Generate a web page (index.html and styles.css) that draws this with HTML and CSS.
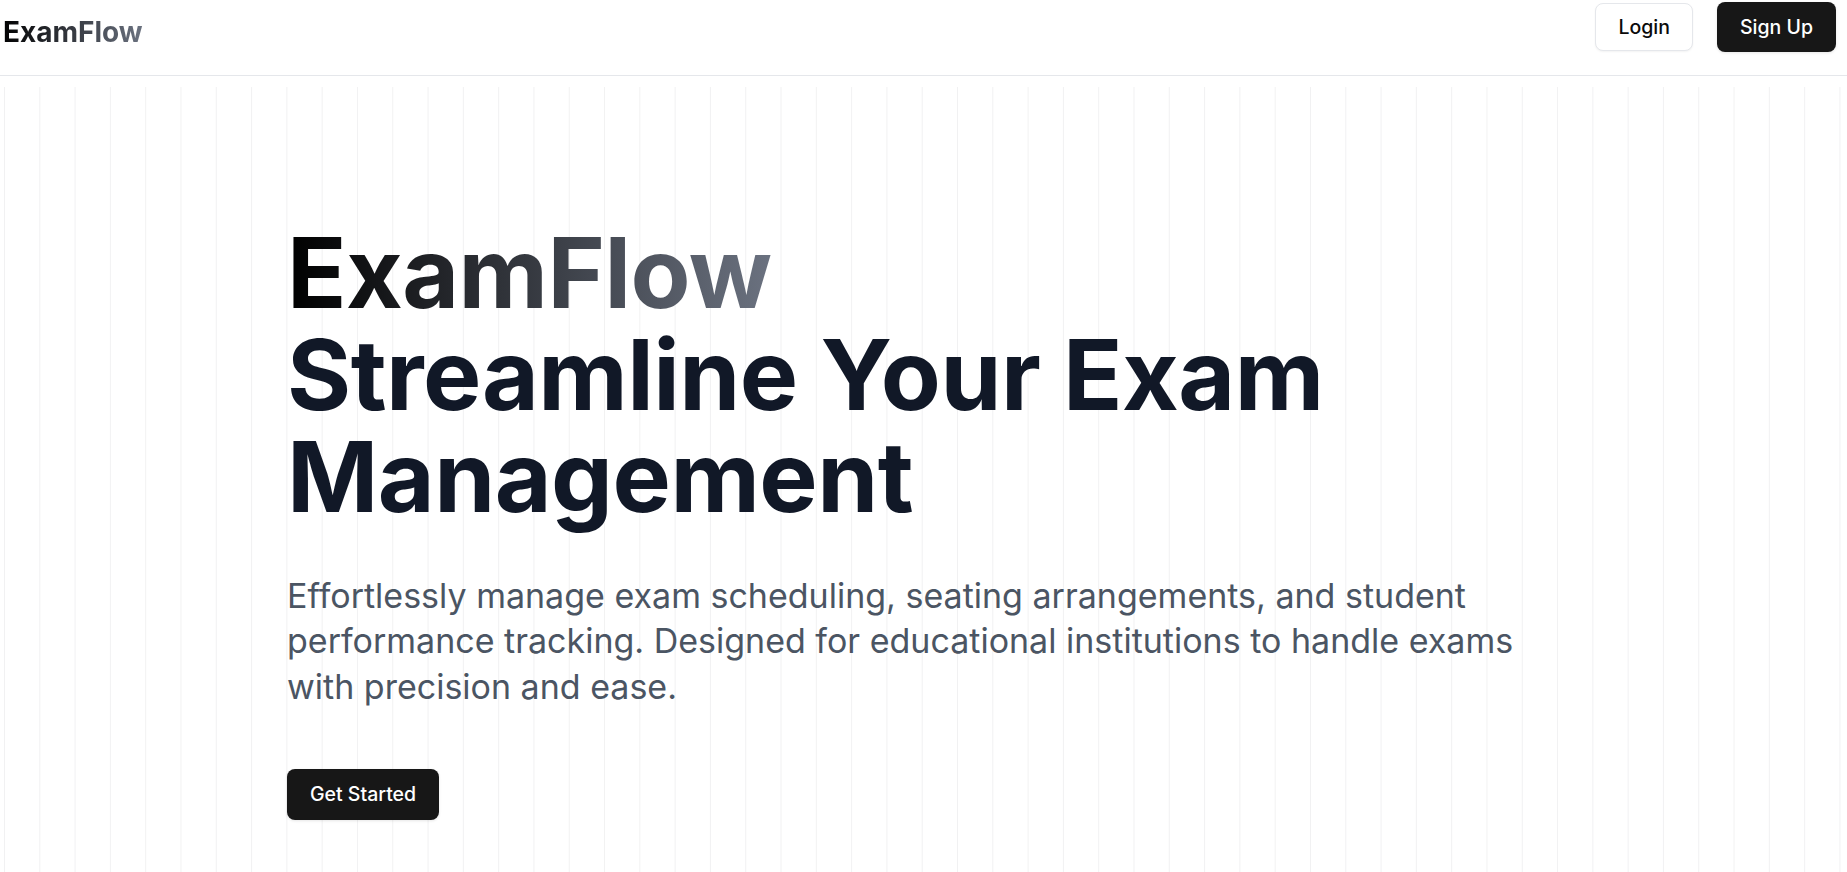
FILE: index.html
```html
<!DOCTYPE html>
<html lang="en">
<head>
<meta charset="utf-8">
<title>ExamFlow</title>
<link rel="stylesheet" href="styles.css">
</head>
<body>
<header class="topbar">
  <a class="logo" href="#">ExamFlow</a>
  <nav class="actions">
    <a class="btn btn-outline" href="#">Login</a>
    <a class="btn btn-dark" href="#">Sign Up</a>
  </nav>
</header>
<main class="hero">
  <div class="container">
    <h1 class="title">
      <span class="brand">ExamFlow</span><br>
      Streamline Your Exam Management
    </h1>
    <p class="lead">Effortlessly manage exam scheduling, seating arrangements, and student performance tracking. Designed for educational institutions to handle exams with precision and ease.</p>
    <a class="btn btn-dark btn-cta" href="#">Get Started</a>
  </div>
</main>
</body>
</html>
```
FILE: styles.css
```css
* { box-sizing: border-box; }
html, body { margin: 0; padding: 0; }
body {
  font-family: Inter, "Noto Sans", sans-serif;
  font-optical-sizing: none;
  background: #ffffff;
  color: #111827;
  height: 872px;
  overflow: hidden;
}
a { text-decoration: none; }

.topbar {
  display: flex;
  justify-content: space-between;
  align-items: flex-start;
  height: 76px;
  border-bottom: 1px solid #e5e7eb;
}
.logo {
  margin-top: 18px;
  padding-left: 3px;
  font-size: 28px;
  line-height: 28px;
  font-weight: 700;
  background: linear-gradient(to right, #000000, #6b7280);
  -webkit-background-clip: text;
  background-clip: text;
  color: transparent;
}
.actions {
  display: flex;
  align-items: flex-start;
  gap: 24px;
  padding-top: 2px;
  padding-right: 11px;
}
.btn {
  display: inline-flex;
  align-items: center;
  justify-content: center;
  font-size: 19.5px;
  font-weight: 500;
  border-radius: 8px;
  padding: 0 23px;
}
.btn-outline {
  height: 48px;
  margin-top: 1px;
  padding: 0 22px;
  background: #ffffff;
  color: #0a0a0a;
  border: 1px solid #e5e7eb;
  box-shadow: 0 1px 2px rgba(0,0,0,0.05);
}
.btn-dark {
  height: 50px;
  background: #171717;
  color: #ffffff;
  box-shadow: 0 1px 3px rgba(0,0,0,0.1);
}

.hero {
  margin-top: 11px;
  height: calc(872px - 87px);
  padding-top: 134.6px;
  background-image: linear-gradient(to right, #f1f1f2 0, #f1f1f2 1px, transparent 1px);
  background-size: 35.3px 100%;
  background-position: 4px 0;
  background-repeat: repeat-x;
}
.container {
  max-width: 1273px;
  margin: 0 auto;
}
.title {
  margin: 0;
  font-size: 98px;
  line-height: 102px;
  font-weight: 700;
  letter-spacing: -0.5px;
  color: #111827;
}
.brand {
  background: linear-gradient(to right, #000000, #6b7280);
  -webkit-background-clip: text;
  background-clip: text;
  color: transparent;
}
.lead {
  margin: 45px 0 0;
  font-size: 34px;
  line-height: 45.5px;
  color: #4b5563;
  font-weight: 400;
}
.btn-cta {
  margin-top: 59.5px;
  height: 51px;
  padding: 0 23px;
}
```
